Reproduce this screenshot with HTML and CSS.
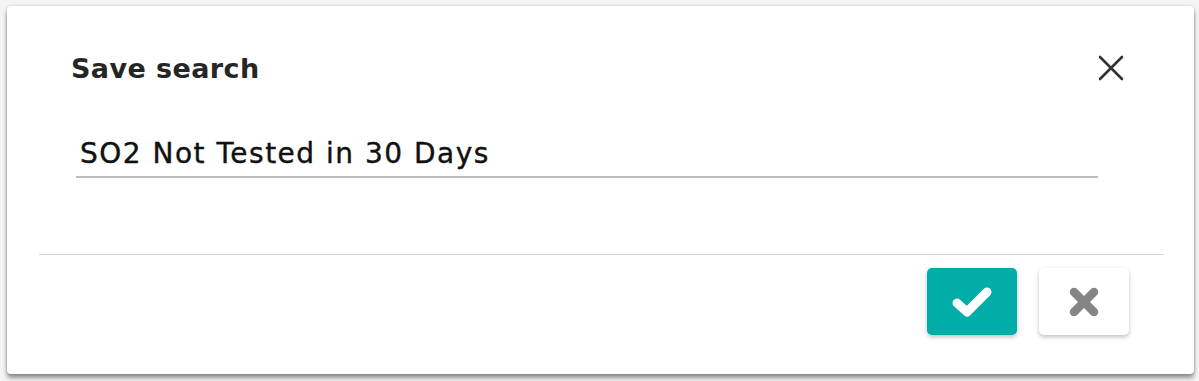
FILE: index.html
```html
<!DOCTYPE html>
<html>
<head>
<meta charset="utf-8">
<link rel="stylesheet" href="styles.css">
</head>
<body>
<div class="dialog">
  <div class="header">
    <h2 class="title">Save search</h2>
    <button class="close" aria-label="Close">
      <svg width="26" height="26" viewBox="0 0 26 26"><path d="M2 2 L24 24 M24 2 L2 24" stroke="#333" stroke-width="2.6" stroke-linecap="round" fill="none"/></svg>
    </button>
  </div>
  <div class="body">
    <div class="field">SO2 Not Tested in 30 Days</div>
  </div>
  <div class="divider"></div>
  <div class="actions">
    <button class="btn ok" aria-label="Save">
      <svg width="44" height="34" viewBox="0 0 44 34"><path d="M7 18 L17 27 L37 7" stroke="#fff" stroke-width="9" stroke-linecap="round" stroke-linejoin="round" fill="none"/></svg>
    </button>
    <button class="btn cancel" aria-label="Cancel">
      <svg width="32" height="32" viewBox="0 0 32 32"><path d="M6 6 L26 26 M26 6 L6 26" stroke="#858585" stroke-width="8.5" stroke-linecap="round" fill="none"/></svg>
    </button>
  </div>
</div>
</body>
</html>
```
FILE: styles.css
```css
html, body {
  margin: 0;
  padding: 0;
  background: #f4f4f4;
}
body {
  padding: 6px 5px 7px 7px;
  font-family: "DejaVu Sans", "Open Sans", sans-serif;
}
.dialog {
  width: 1187px;
  height: 368px;
  box-sizing: border-box;
  background: #fff;
  border-radius: 4px;
  box-shadow: 0 4px 4px rgba(0,0,0,0.4), 0 0 3px rgba(0,0,0,0.2);
  display: flex;
  flex-direction: column;
}
.header {
  display: flex;
  align-items: center;
  justify-content: space-between;
  padding: 49px 70px 0 64px;
  height: 26px;
}
.title {
  margin: 0;
  font-size: 27px;
  font-weight: bold;
  color: #262626;
  letter-spacing: 0.4px;
}
.close {
  border: 0;
  background: none;
  padding: 0;
  width: 26px;
  height: 26px;
  display: flex;
}
.body {
  padding: 57px 96px 0 69px;
  height: 97px;
  box-sizing: border-box;
}
.field {
  border-bottom: 2px solid #bdbdbd;
  font-size: 28px;
  color: #111;
  padding: 0 0 6px 4px;
  line-height: 32px;
  letter-spacing: 1.5px;
  -webkit-text-stroke: 0.4px #111;
}
.divider {
  margin: 76px 30px 0 32px;
  height: 1px;
  background: #d6d6d6;
}
.actions {
  display: flex;
  justify-content: flex-end;
  gap: 22px;
  padding: 13px 65px 0 0;
}
.btn {
  width: 90px;
  height: 67px;
  border: 0;
  border-radius: 5px;
  display: flex;
  align-items: center;
  justify-content: center;
  padding: 0;
  box-shadow: 0 2px 4px rgba(0,0,0,0.25);
}
.ok { background: #00aea7; }
.cancel { background: #fff; }
```
